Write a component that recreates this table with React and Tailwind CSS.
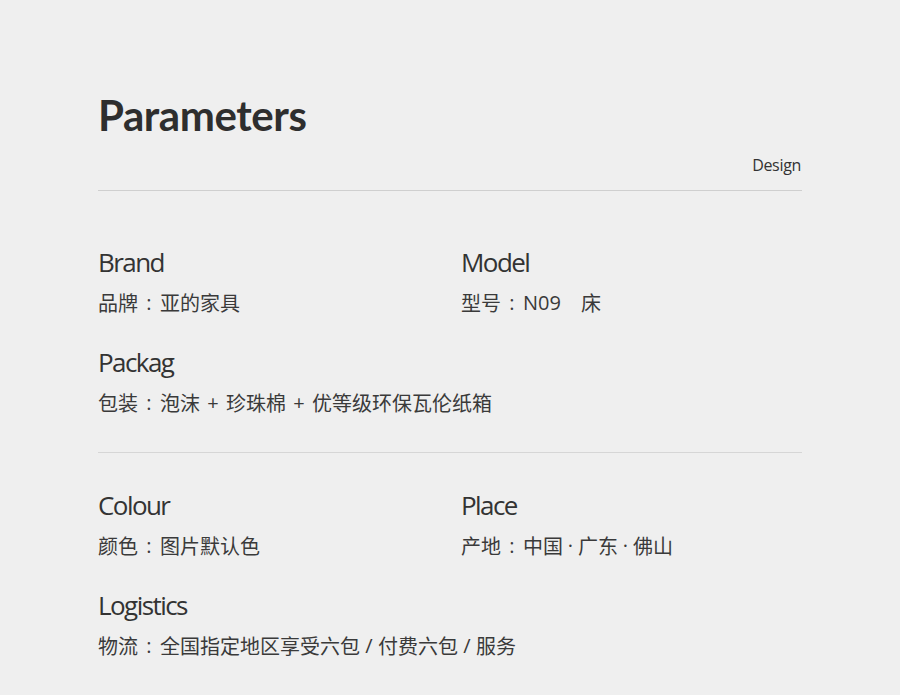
const LATIN = "'Open Sans', 'Noto Sans CJK SC', sans-serif";
const CJK = "'Noto Sans CJK SC', 'Open Sans', sans-serif";

// narrow latin separators between the CJK runs
const Sep = ({ ch, w = 'w-[22px]' }) => (
    <span className={`text-center shrink-0 ${w}`} style={{ fontFamily: "'Open Sans', sans-serif" }}>{ch}</span>
);

const Field = ({ label, children, className = '' }) => (
    <div className={className}>
        <div className="text-[26px] leading-[32px] text-[#333] tracking-[-0.06em]" style={{ fontFamily: LATIN }}>{label}</div>
        <div className="mt-[11px] h-[28px] flex items-center text-[20px] leading-[28px] text-[#3a3a3a] whitespace-nowrap" style={{ fontFamily: CJK }}>{children}</div>
    </div>
);

const App = () => {
    return (
        <div className="w-[900px] h-[695px] bg-[#efefef] overflow-hidden px-[98px] pt-[90px]">
            <h1 className="text-[42px] leading-[50px] font-bold text-[#2e2e2e] tracking-[-0.01em]" style={{ fontFamily: "Lato, 'Open Sans', sans-serif" }}>Parameters</h1>
            <div className="mt-[15px] flex justify-end pr-[1px]">
                <span className="text-[16px] leading-[20px] text-[#333] tracking-[-0.02em]" style={{ fontFamily: LATIN }}>Design</span>
            </div>
            <div className="mt-[15px] border-t border-[#cfcfcf]" />

            <div className="pt-[55px] pb-[35px] grid grid-cols-[363px_1fr]">
                <Field label="Brand"><span>品牌</span><Sep ch=":" /><span>亚的家具</span></Field>
                <Field label="Model">
                    <span>型号</span><Sep ch=":" /><span style={{ fontFamily: "'Open Sans', sans-serif" }}>N09</span><span className="w-[20px]" /><span>床</span>
                </Field>
                <Field className="col-span-2 mt-[29px]" label="Packag">
                    <span>包装</span><Sep ch=":" /><span>泡沫</span><Sep ch="+" w="w-[26px]" /><span>珍珠棉</span><Sep ch="+" w="w-[26px]" /><span>优等级环保瓦伦纸箱</span>
                </Field>
            </div>
            <div className="border-t border-[#d6d6d6]" />

            <div className="pt-[36px] grid grid-cols-[363px_1fr]">
                <Field label="Colour"><span>颜色</span><Sep ch=":" /><span>图片默认色</span></Field>
                <Field label="Place">
                    <span>产地</span><Sep ch=":" /><span>中国</span><Sep ch="·" w="w-[15px]" /><span>广东</span><Sep ch="·" w="w-[15px]" /><span>佛山</span>
                </Field>
                <Field className="col-span-2 mt-[29px]" label="Logistics">
                    <span>物流</span><Sep ch=":" /><span>全国指定地区享受六包</span><Sep ch="/" w="w-[18px]" /><span>付费六包</span><Sep ch="/" w="w-[18px]" /><span>服务</span>
                </Field>
            </div>
        </div>
    );
};

export default App;
